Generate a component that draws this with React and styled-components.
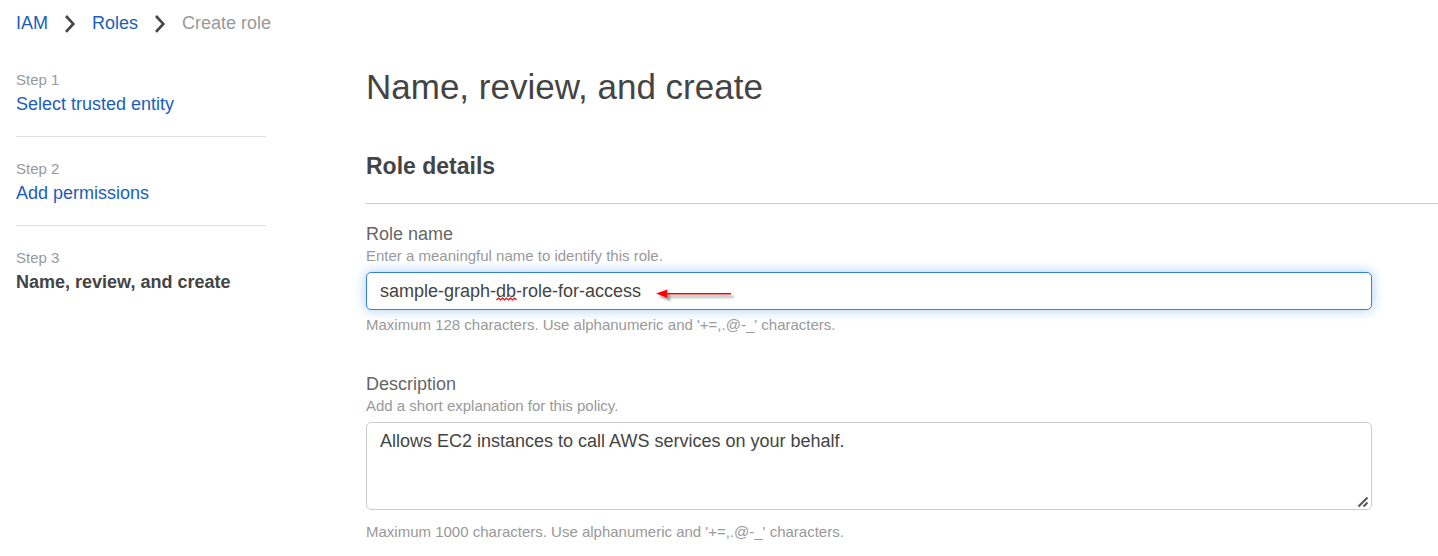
import React from "react";
import styled, { createGlobalStyle } from "styled-components";

const GlobalStyle = createGlobalStyle`
  *, *::before, *::after { box-sizing: border-box; }
  body {
    margin: 0;
    background: #fff;
    color: #444;
    font: 18px/24px "Liberation Sans", Arial, sans-serif;
  }
`;

const Page = styled.div`
  padding: 11px 0 14px 16px;
`;

const Breadcrumbs = styled.nav`
  display: flex;
  align-items: center;
  gap: 16px;
`;

const Link = styled.a`
  color: #1b5dbd;
  text-decoration: none;
  &:hover { text-decoration: underline; }
`;

const CurrentCrumb = styled.span`
  color: #999;
`;

const Chevron = styled.svg`
  width: 12px;
  height: 20px;
  fill: none;
  stroke: #444;
  stroke-width: 2.6;
`;

const Columns = styled.div`
  display: grid;
  grid-template-columns: 250px minmax(0, 1fr);
  column-gap: 100px;
  padding-top: 29px;
`;

const Steps = styled.ol`
  list-style: none;
  margin: 0;
  padding: 6px 0 0;
`;

const Step = styled.li`
  & + & {
    margin-top: 20px;
    border-top: 1px solid #ddd;
    padding-top: 22px;
  }
`;

const StepNumber = styled.div`
  margin-bottom: 2px;
  color: #999;
  font-size: 15px;
  line-height: 20px;
`;

const Title = styled.h1`
  margin: 0;
  font-size: 35px;
  line-height: 46px;
  font-weight: 400;
`;

const SectionTitle = styled.h2`
  margin: 0;
  padding: 41px 0 22px;
  border-bottom: 1px solid #ccc;
  font-size: 23px;
  line-height: 30px;
  font-weight: 700;
`;

const Fields = styled.form`
  display: grid;
  row-gap: 37px;
  padding: 18px 66px 0 0;
`;

const Field = styled.div`
  display: flex;
  flex-direction: column;
`;

const Label = styled.label`
  color: #666;
`;

const Hint = styled.div`
  color: #999;
  font-size: 15px;
  line-height: 20px;
`;

const Control = styled.div`
  position: relative;
  display: flex;
  margin: 6px 0 ${(p) => (p.$tall ? "12px" : "5px")};
`;

const TextInput = styled.input`
  width: 100%;
  height: 38px;
  padding: 1px 13px 0;
  border: 1px solid #3184dc;
  border-radius: 5px;
  outline: none;
  box-shadow: 0 0 12px 1px #b4d3f6;
  background: #fff;
  color: #444;
  font: inherit;
`;

const TextArea = styled.textarea`
  width: 100%;
  height: 88px;
  padding: 6px 13px;
  border: 1px solid #ccc;
  border-radius: 5px;
  resize: none;
  outline: none;
  background: #fff;
  color: #444;
  font: inherit;
`;

const SpellingMark = styled.svg`
  position: absolute;
  left: 130px;
  top: 25px;
  width: 21px;
  height: 4px;
  pointer-events: none;
`;

const Arrow = styled.svg`
  position: absolute;
  left: 288px;
  top: 14px;
  width: 84px;
  height: 18px;
  pointer-events: none;
`;

const Grip = styled.svg`
  position: absolute;
  right: 3px;
  bottom: 2px;
  width: 11px;
  height: 11px;
  stroke: #555;
  stroke-width: 2;
  pointer-events: none;
`;

const Separator = () => (
  <Chevron viewBox="0 0 12 20" aria-hidden="true">
    <path d="M2 3 L9.3 10.9 L2 18.8" />
  </Chevron>
);

export default function App() {
  return (
    <Page>
      <GlobalStyle />
      <Breadcrumbs aria-label="Breadcrumb">
        <Link href="#iam">IAM</Link>
        <Separator />
        <Link href="#roles">Roles</Link>
        <Separator />
        <CurrentCrumb aria-current="page">Create role</CurrentCrumb>
      </Breadcrumbs>
      <Columns>
        <Steps>
          <Step>
            <StepNumber>Step 1</StepNumber>
            <Link href="#entity">Select trusted entity</Link>
          </Step>
          <Step>
            <StepNumber>Step 2</StepNumber>
            <Link href="#permissions">Add permissions</Link>
          </Step>
          <Step aria-current="step">
            <StepNumber>Step 3</StepNumber>
            <strong>Name, review, and create</strong>
          </Step>
        </Steps>
        <main>
          <Title>Name, review, and create</Title>
          <SectionTitle>Role details</SectionTitle>
          <Fields>
            <Field>
              <Label htmlFor="role-name">Role name</Label>
              <Hint>Enter a meaningful name to identify this role.</Hint>
              <Control>
                <TextInput
                  id="role-name"
                  type="text"
                  maxLength={128}
                  spellCheck={false}
                  defaultValue="sample-graph-db-role-for-access"
                />
                <SpellingMark viewBox="0 0 21 4" aria-hidden="true">
                  <path
                    d="M0.5 3 L2.5 1 L4.5 3 L6.5 1 L8.5 3 L10.5 1 L12.5 3 L14.5 1 L16.5 3 L18.5 1 L20.5 3"
                    fill="none"
                    stroke="#f00"
                    strokeWidth="1.2"
                  />
                </SpellingMark>
                <Arrow viewBox="0 0 84 18" aria-hidden="true">
                  <defs>
                    <filter id="arrow-shadow" x="-10%" y="-50%" width="130%" height="250%">
                      <feDropShadow dx="3" dy="3" stdDeviation="1.3" floodColor="#000" floodOpacity="0.4" />
                    </filter>
                  </defs>
                  <path
                    d="M2 7.5 L13.5 3.5 L13 7 L77 7 L77 8.5 L13 8.5 L13.5 12 Z"
                    fill="#f00"
                    filter="url(#arrow-shadow)"
                  />
                </Arrow>
              </Control>
              <Hint>Maximum 128 characters. Use alphanumeric and '+=,.@-_' characters.</Hint>
            </Field>
            <Field>
              <Label htmlFor="description">Description</Label>
              <Hint>Add a short explanation for this policy.</Hint>
              <Control $tall>
                <TextArea
                  id="description"
                  maxLength={1000}
                  spellCheck={false}
                  defaultValue="Allows EC2 instances to call AWS services on your behalf."
                />
                <Grip viewBox="0 0 11 11" aria-hidden="true">
                  <path d="M0.5 9.5 L9.5 0.5 M5.5 9.5 L9.5 5.5" />
                </Grip>
              </Control>
              <Hint>Maximum 1000 characters. Use alphanumeric and '+=,.@-_' characters.</Hint>
            </Field>
          </Fields>
        </main>
      </Columns>
    </Page>
  );
}
